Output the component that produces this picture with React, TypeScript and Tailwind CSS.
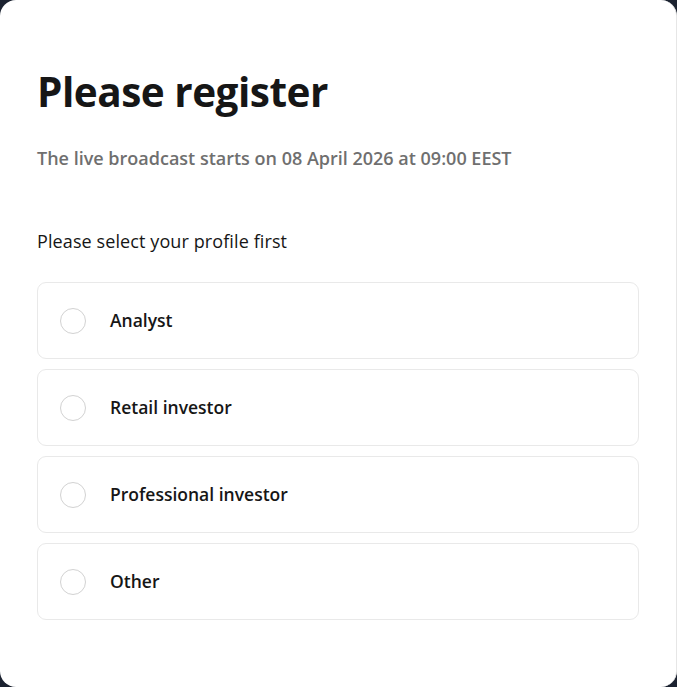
import React from "react";

const options = ["Analyst", "Retail investor", "Professional investor", "Other"];

export default function App() {
  return (
    <div className="min-h-[687px] w-full bg-[#1b2230]" style={{ fontFamily: '"Open Sans", "Noto Sans", sans-serif' }}>
      <div className="h-[687px] w-full rounded-2xl border-r border-[#e6e6e6] bg-white px-[37px] pt-[64px]">
        <h1 className="text-[40.5px] font-bold leading-[56px] tracking-[-0.5px] text-[#161616]">Please register</h1>
        <p className="mt-[26px] text-[18px] font-semibold leading-[24px] text-[#6f6f6f]">
          The live broadcast starts on 08 April 2026 at 09:00 EEST
        </p>
        <p className="mt-[59px] text-[18px] font-medium leading-[24px] tracking-[0.1px] text-[#161616]">Please select your profile first</p>
        <div className="mt-[29px] flex w-[602px] flex-col gap-[10px]">
          {options.map((o) => (
            <label
              key={o}
              className="flex h-[77px] items-center rounded-[9px] border border-[#e9e9e9] bg-white pl-[22px]"
            >
              <span className="h-[26px] w-[26px] shrink-0 rounded-full border-[1.5px] border-[#d2d2d2]" />
              <span className="ml-[24px] text-[17.5px] font-semibold text-[#161616]">{o}</span>
            </label>
          ))}
        </div>
      </div>
    </div>
  );
}
